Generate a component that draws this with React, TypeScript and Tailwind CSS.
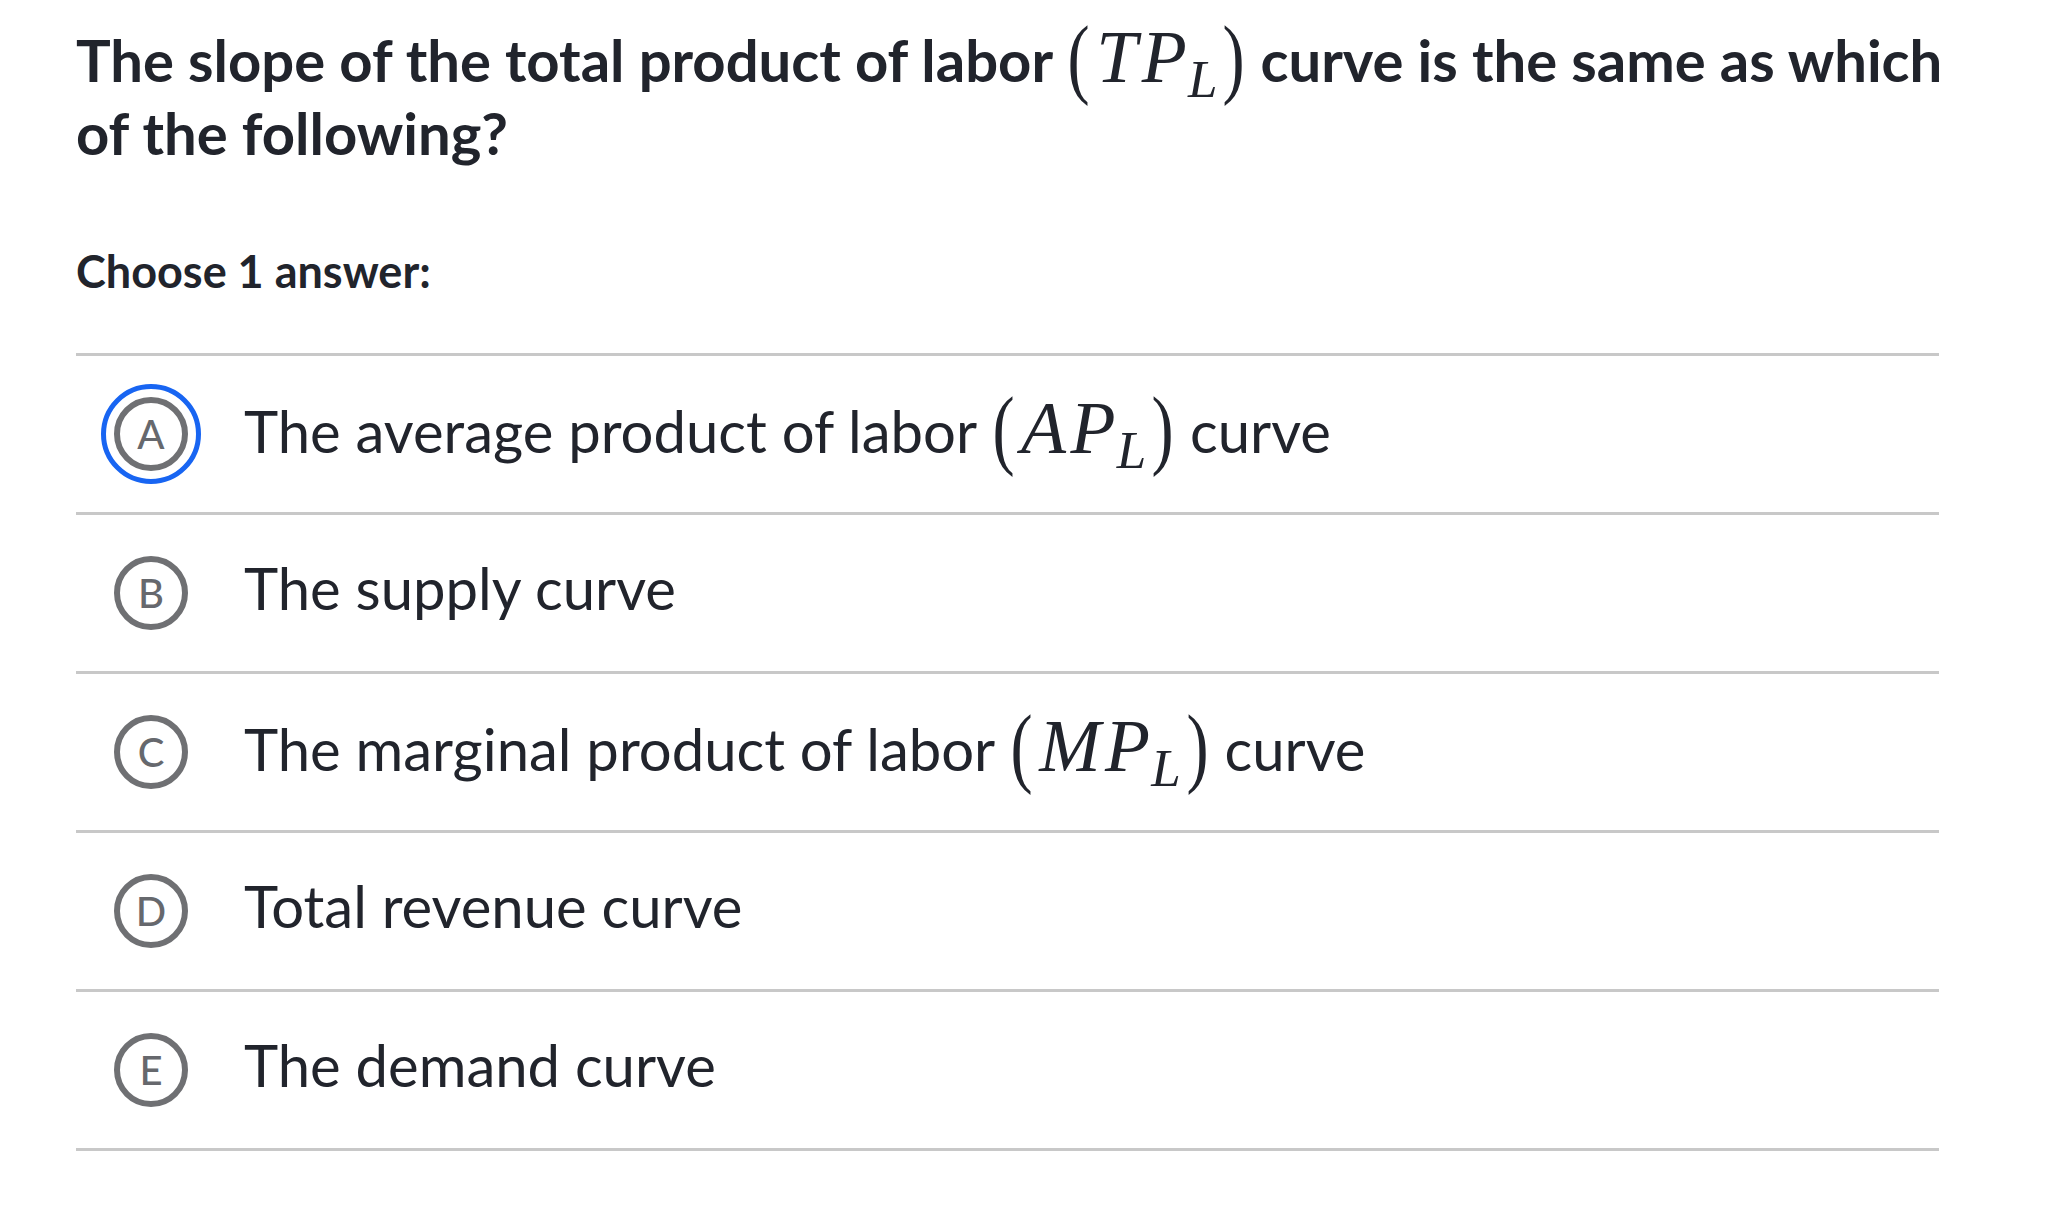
import React from 'react';

const Math = ({ vars }: { vars: string }) => (
  <span className="inline-flex items-baseline font-['Liberation_Serif',serif] text-[1.27em] leading-none text-[#21242c] font-normal">
    <span className="inline-block scale-y-[1.22] scale-x-[0.9] pr-[0.08em]">(</span>
    <span className="italic tracking-[0.06em]">{vars}</span>
    <span className="relative top-[0.28em] -ml-[0.06em] text-[0.72em] italic">L</span>
    <span className="inline-block scale-y-[1.22] scale-x-[0.9] pl-[0.06em]">)</span>
  </span>
);

const options = [
  { letter: 'A', selected: true, text: (<>The average product of labor <Math vars="AP" /> curve</>) },
  { letter: 'B', selected: false, text: <>The supply curve</> },
  { letter: 'C', selected: false, text: (<>The marginal product of labor <Math vars="MP" /> curve</>) },
  { letter: 'D', selected: false, text: <>Total revenue curve</> },
  { letter: 'E', selected: false, text: <>The demand curve</> },
];

export default function App() {
  return (
    <div className="min-h-screen w-full bg-white font-['Lato','Open_Sans',sans-serif] text-[#21242c]">
      <div className="pl-[76px] pt-[21px]">
        {/* Question */}
        <h1 className="w-[1900px] text-[58px] font-bold leading-[73px]">
          The slope of the total product of labor <Math vars="TP" /> curve is the same as which
          <br />
          of the following?
        </h1>

        <p className="mt-[75px] text-[45px] font-bold leading-[54px]">Choose 1 answer:</p>

        {/* Choices */}
        <div className="mt-[55px] w-[1863px] border-t-[3px] border-[#c8c8c8]">
          {options.map((opt) => (
            <div
              key={opt.letter}
              className="flex h-[159px] items-center border-b-[3px] border-[#c8c8c8] pl-[38px]"
            >
              <div className="relative flex h-[74px] w-[74px] shrink-0 items-center justify-center">
                {opt.selected && (
                  <div className="absolute -inset-[13px] rounded-full border-[5px] border-[#1865f2]" />
                )}
                <div className="flex h-[74px] w-[74px] items-center justify-center rounded-full border-[6px] border-[#6f7073] text-[40px] font-medium text-[#66686d]">
                  {opt.letter}
                </div>
              </div>
              <div className="ml-[56px] pb-[10px] text-[58px] leading-none">{opt.text}</div>
            </div>
          ))}
        </div>
      </div>
    </div>
  );
}
